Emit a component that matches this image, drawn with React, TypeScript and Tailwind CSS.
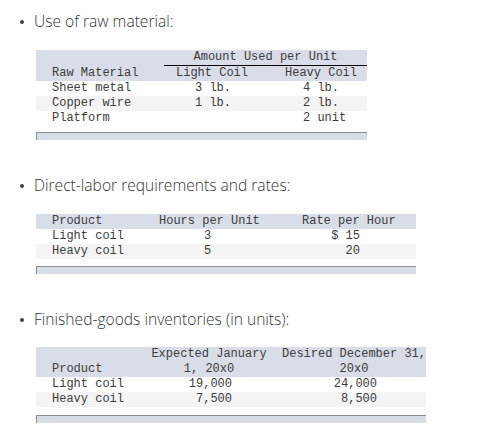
const mono = "font-['Liberation_Mono',monospace] text-[12px] leading-[15px] text-[#3c3c3c] whitespace-pre";

function Bullet({ children }: { children: string }) {
  return (
    <div className="flex items-center h-[20px] pl-[20px] text-[15.6px] text-[#333] font-light font-['Open_Sans',sans-serif]">
      <span className="w-[4px] h-[4px] rounded-full bg-[#444] mr-[10px]" />
      <span>{children}</span>
    </div>
  );
}

function Footer() {
  return <div className="h-[8px] bg-[#d9dde8] border-t border-l border-[#8c8c8c]" />;
}

function RawMaterialTable() {
  const rows = [
    ["Sheet metal", "3 lb.", "4 lb."],
    ["Copper wire", "1 lb.", "2 lb."],
    ["Platform", "", "2 unit"],
  ];
  return (
    <div className={`w-[331px] ${mono}`}>
      <div className="bg-[#d9dde8]">
        <div className="flex">
          <div className="w-[128px]" />
          <div className="w-[203px] text-center border-b border-black">Amount Used per Unit</div>
        </div>
        <div className="flex">
          <div className="w-[128px] pl-[16px]">Raw Material</div>
          <div className="w-[96px] text-center">Light Coil</div>
          <div className="w-[107px] pl-[25px]">Heavy Coil</div>
        </div>
      </div>
      {rows.map((r, i) => (
        <div key={i} className={`flex ${i % 2 === 1 ? "bg-[#f4f4f4]" : "bg-white"}`}>
          <div className="w-[128px] pl-[16px]">{r[0]}</div>
          <div className="w-[96px] pl-[31px]">{r[1]}</div>
          <div className="w-[107px] pl-[43px]">{r[2]}</div>
        </div>
      ))}
      <div className="mt-[6px]">
        <Footer />
      </div>
    </div>
  );
}

function LaborTable() {
  const rows = [
    ["Light coil", "3", "$ 15"],
    ["Heavy coil", "5", "20"],
  ];
  return (
    <div className={`w-[380px] ${mono}`}>
      <div className="flex bg-[#d9dde8]">
        <div className="w-[112px] pl-[16px]">Product</div>
        <div className="w-[112px] pl-[11px]">Hours per Unit</div>
        <div className="w-[156px] pl-[42px]">Rate per Hour</div>
      </div>
      {rows.map((r, i) => (
        <div key={i} className={`flex ${i % 2 === 1 ? "bg-[#f4f4f4]" : "bg-white"}`}>
          <div className="w-[112px] pl-[16px]">{r[0]}</div>
          <div className="w-[112px] pl-[56px]">{r[1]}</div>
          <div className="w-[156px] pr-[56px] text-right">{r[2]}</div>
        </div>
      ))}
      <div className="mt-[7px]">
        <Footer />
      </div>
    </div>
  );
}

function InventoryTable() {
  const rows = [
    ["Light coil", "19,000", "24,000"],
    ["Heavy coil", "7,500", "8,500"],
  ];
  return (
    <div className={`w-[390px] ${mono}`}>
      <div className="bg-[#d9dde8]">
        <div className="flex">
          <div className="w-[112px]" />
          <div className="w-[122px] text-center">Expected January</div>
          <div className="w-[156px] pl-[12px]">Desired December 31,</div>
        </div>
        <div className="flex">
          <div className="w-[112px] pl-[16px]">Product</div>
          <div className="w-[122px] text-center">1, 20x0</div>
          <div className="w-[156px] pl-[12px] text-center">20x0</div>
        </div>
      </div>
      {rows.map((r, i) => (
        <div key={i} className={`flex ${i % 2 === 1 ? "bg-[#f4f4f4]" : "bg-white"}`}>
          <div className="w-[112px] pl-[16px]">{r[0]}</div>
          <div className="w-[122px] pr-[38px] text-right">{r[1]}</div>
          <div className="w-[156px] pr-[49px] text-right">{r[2]}</div>
        </div>
      ))}
      <div className="mt-[8px]">
        <Footer />
      </div>
    </div>
  );
}

export default function App() {
  return (
    <div className="w-[479px] h-[443px] bg-white overflow-hidden">
      <div className="pt-[12px]">
        <Bullet>Use of raw material:</Bullet>
      </div>
      <div className="pl-[36px] mt-[18px]">
        <RawMaterialTable />
      </div>
      <div className="mt-[36px]">
        <Bullet>Direct-labor requirements and rates:</Bullet>
      </div>
      <div className="pl-[36px] mt-[18px]">
        <LaborTable />
      </div>
      <div className="mt-[36px]">
        <Bullet>Finished-goods inventories (in units):</Bullet>
      </div>
      <div className="pl-[36px] mt-[17px]">
        <InventoryTable />
      </div>
    </div>
  );
}
